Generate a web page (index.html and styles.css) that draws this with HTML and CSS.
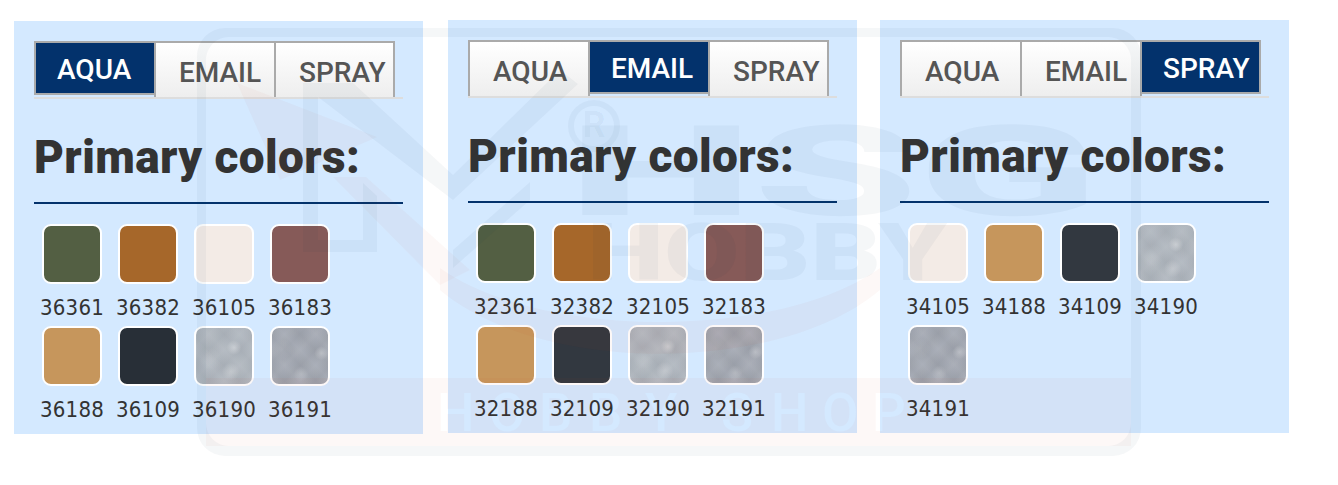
FILE: index.html
```html
<!DOCTYPE html>
<html lang="en">
<head>
    <meta charset="UTF-8">
    <meta name="viewport" content="width=device-width, initial-scale=1.0">
    <title>Primary colors</title>
    <link rel="stylesheet" href="styles.css">
</head>
<body>
    <div class="page">
        <div class="panel panel-aqua">
            <div class="tabs">
                <a class="tab active">AQUA</a>
                <a class="tab">EMAIL</a>
                <a class="tab">SPRAY</a>
            </div>
            <h2 class="title">Primary colors:</h2>
            <div class="swatches">
                <div class="item"><div class="swatch c-green"></div><span>36361</span></div>
                <div class="item"><div class="swatch c-brown"></div><span>36382</span></div>
                <div class="item"><div class="swatch c-cream"></div><span>36105</span></div>
                <div class="item"><div class="swatch c-mauve"></div><span>36183</span></div>
                <div class="item"><div class="swatch c-tan"></div><span>36188</span></div>
                <div class="item"><div class="swatch c-dark"></div><span>36109</span></div>
                <div class="item"><div class="swatch c-silver"></div><span>36190</span></div>
                <div class="item"><div class="swatch c-steel"></div><span>36191</span></div>
            </div>
        </div>

        <div class="panel panel-email">
            <div class="tabs">
                <a class="tab">AQUA</a>
                <a class="tab active">EMAIL</a>
                <a class="tab">SPRAY</a>
            </div>
            <h2 class="title">Primary colors:</h2>
            <div class="swatches">
                <div class="item"><div class="swatch c-green"></div><span>32361</span></div>
                <div class="item"><div class="swatch c-brown"></div><span>32382</span></div>
                <div class="item"><div class="swatch c-cream"></div><span>32105</span></div>
                <div class="item"><div class="swatch c-mauve"></div><span>32183</span></div>
                <div class="item"><div class="swatch c-tan"></div><span>32188</span></div>
                <div class="item"><div class="swatch c-slate"></div><span>32109</span></div>
                <div class="item"><div class="swatch c-silver"></div><span>32190</span></div>
                <div class="item"><div class="swatch c-steel"></div><span>32191</span></div>
            </div>
        </div>

        <div class="panel panel-spray">
            <div class="tabs">
                <a class="tab">AQUA</a>
                <a class="tab">EMAIL</a>
                <a class="tab active">SPRAY</a>
            </div>
            <h2 class="title">Primary colors:</h2>
            <div class="swatches">
                <div class="item"><div class="swatch c-cream"></div><span>34105</span></div>
                <div class="item"><div class="swatch c-tan"></div><span>34188</span></div>
                <div class="item"><div class="swatch c-slate"></div><span>34109</span></div>
                <div class="item"><div class="swatch c-silver"></div><span>34190</span></div>
                <div class="item"><div class="swatch c-steel"></div><span>34191</span></div>
            </div>
        </div>
    </div>

    <!-- site watermark, sits over the whole page -->
    <svg class="watermark" width="1338" height="485" viewBox="0 0 1338 485" aria-hidden="true">
        <defs>
            <mask id="bandHoles">
                <rect x="0" y="0" width="1338" height="485" fill="#fff"/>
                <text class="wm-band-text" x="437 489 539 589 645 721 771 822 872" y="431" fill="#000">HOBBYSHOP</text>
            </mask>
        </defs>
        <path class="wm-red" d="M237 83 L377 137 L280 180 Z"/>
        <path class="wm-red" d="M333 177 L366 177 L470 270 L440 285 Z"/>
        <path class="wm-red" d="M440 268 C540 340 780 340 880 268 L880 290 C780 375 540 375 440 290 Z"/>
        <path class="wm-red" d="M206 378 H1131 V446 H206 Z" mask="url(#bandHoles)"/>
        <path class="wm-line" fill-rule="evenodd" d="M225 28 H1113 A28 28 0 0 1 1141 56 V428 A28 28 0 0 1 1113 456 H225 A28 28 0 0 1 197 428 V56 A28 28 0 0 1 225 28 Z M229 37 A23 23 0 0 0 206 60 V423 A23 23 0 0 0 229 446 H1108 A23 23 0 0 0 1131 423 V60 A23 23 0 0 0 1108 37 Z"/>
        <path class="wm-line" d="M303 83 H353 L453 175 L560 70 L578 84 L453 200 L318 97 V240 H363 V183 L377 196 V252 H303 Z"/>
        <path class="wm-line" d="M453 250 L530 182 V200 L453 268 Z"/>
        <circle class="wm-ring" cx="594" cy="126" r="23"/>
        <text class="wm-reg" x="594" y="137" text-anchor="middle">R</text>
        <text class="wm-big" x="568" y="215" textLength="530" lengthAdjust="spacingAndGlyphs">HSG</text>
        <text class="wm-hobby" x="587" y="280" textLength="360" lengthAdjust="spacingAndGlyphs">HOBBY</text>
    </svg>
</body>
</html>
```

FILE: styles.css
```css
body {
    margin: 0;
    background: #fff;
    font-family: 'Roboto', sans-serif;
    color: #333;
    overflow: hidden;
}

.page {
    display: flex;
    align-items: flex-start;
    padding: 20px 0 0 14px;
}

.panel {
    width: 409px;
    height: 413px;
    box-sizing: border-box;
    padding: 20px 20px 0;
    background: #d4e9ff;
}

.panel-aqua {
    margin-top: 1px;
}

.panel-email {
    margin-left: 25px;
}

.panel-spray {
    margin-left: 23px;
}

.tabs {
    display: flex;
    align-items: flex-start;
    height: 56px;
    border-bottom: 2px solid #ddd;
}

.tab {
    position: relative;
    box-sizing: border-box;
    width: 120px;
    height: 56px;
    padding-left: 23px;
    border-top: 2px solid #aaa;
    border-left: 2px solid #aaa;
    background: linear-gradient(#fff, #eee);
    font-size: 28px;
    font-weight: 500;
    line-height: 60px;
    color: #555;
}

.tab:last-child {
    width: 121px;
    border-right: 2px solid #aaa;
}

.tab.active {
    height: 54px;
    padding-left: 21px;
    border-bottom: 2px solid #aaa;
    background: #03326c;
    line-height: 54px;
    color: #fff;
}

/* divider keeps going down to the bar line next to the active tab */
.tab.active:not(:first-child)::before {
    content: "";
    position: absolute;
    left: -2px;
    bottom: -4px;
    width: 2px;
    height: 4px;
    background: #aaa;
}

.title {
    margin: 31px 0 0;
    padding-bottom: 18px;
    border-bottom: 2px solid #03326c;
    font-size: 46px;
    font-weight: 900;
    letter-spacing: 0.4px;
    line-height: 54px;
    color: #333;
}

.swatches {
    display: grid;
    grid-template-columns: repeat(4, 76px);
    grid-auto-rows: 102px;
    margin-top: 20px;
}

.item {
    text-align: center;
    font-family: 'DejaVu Sans Condensed', 'DejaVu Sans', sans-serif;
    font-size: 22px;
    font-stretch: condensed;
    letter-spacing: 0.2px;
    line-height: 24px;
    color: #333;
}

.item span {
    display: block;
    margin-top: 12px;
}

.swatch {
    box-sizing: border-box;
    width: 60px;
    height: 60px;
    margin: 0 auto;
    border: 2px solid #fff;
    border-radius: 9px;
}

.c-green { background: #535f43; }
.c-brown { background: #a6672a; }
.c-cream { background: #f3ebe6; }
.c-mauve { background: #865a58; }
.c-tan { background: #c6965c; }
.c-dark { background: #282f37; }
.c-slate { background: #323840; }

.c-silver {
    background:
        radial-gradient(circle at 68% 35%, rgba(255, 255, 255, 0.35), transparent 14%),
        radial-gradient(circle at 62% 78%, rgba(255, 255, 255, 0.25), transparent 16%),
        radial-gradient(circle at 25% 55%, rgba(255, 255, 255, 0.12), transparent 22%),
        repeating-linear-gradient(45deg, rgba(255, 255, 255, 0.05), rgba(0, 0, 0, 0.02) 11px, rgba(255, 255, 255, 0.05) 22px),
        repeating-linear-gradient(-45deg, rgba(255, 255, 255, 0.05), rgba(0, 0, 0, 0.02) 11px, rgba(255, 255, 255, 0.05) 22px),
        #aeb5bd;
}

.c-steel {
    background:
        radial-gradient(circle at 88% 45%, rgba(255, 255, 255, 0.28), transparent 12%),
        radial-gradient(circle at 52% 82%, rgba(255, 255, 255, 0.18), transparent 14%),
        radial-gradient(circle at 18% 38%, rgba(255, 255, 255, 0.12), transparent 18%),
        repeating-linear-gradient(45deg, rgba(255, 255, 255, 0.04), rgba(0, 0, 0, 0.03) 11px, rgba(255, 255, 255, 0.04) 22px),
        repeating-linear-gradient(-45deg, rgba(255, 255, 255, 0.04), rgba(0, 0, 0, 0.03) 11px, rgba(255, 255, 255, 0.04) 22px),
        #a4a9b3;
}

.watermark {
    position: absolute;
    top: 0;
    left: 0;
    pointer-events: none;
}

.wm-red {
    fill: rgba(210, 50, 30, 0.035);
}

.wm-line {
    fill: rgba(0, 40, 80, 0.04);
}

.wm-ring {
    fill: none;
    stroke: rgba(0, 40, 80, 0.04);
    stroke-width: 6;
}

.wm-reg {
    font-size: 36px;
    font-weight: 700;
    fill: rgba(0, 40, 80, 0.04);
}

.wm-big {
    font-size: 126px;
    font-weight: 900;
    fill: rgba(0, 40, 80, 0.04);
}

.wm-hobby {
    font-size: 80px;
    font-weight: 900;
    fill: rgba(0, 40, 80, 0.04);
}

.wm-band-text {
    font-size: 53px;
    font-weight: 500;
}
```
